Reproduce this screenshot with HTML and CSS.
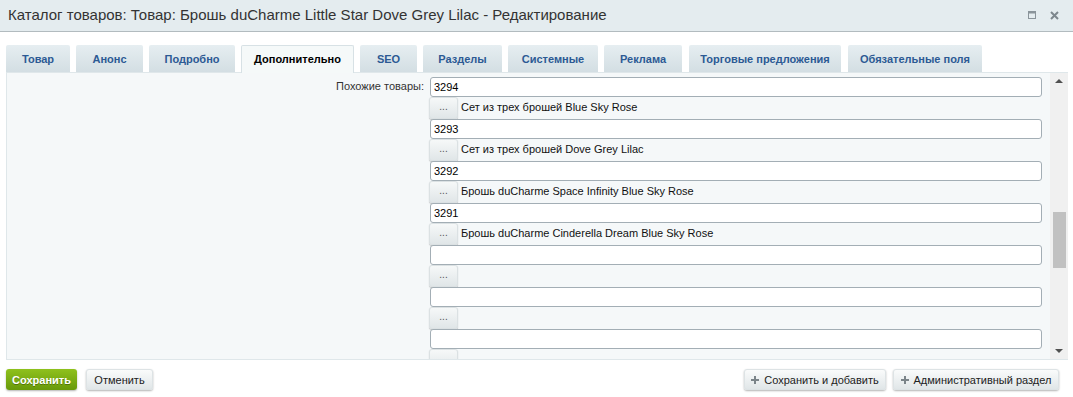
FILE: index.html
```html
<!DOCTYPE html>
<html lang="ru">
<head>
  <meta charset="UTF-8" />
  <title>Редактирование</title>
  <link rel="stylesheet" href="styles.css">
</head>
<body>

<div class="dialog">
  <div class="titlebar">
    <span class="title">Каталог товаров: Товар: Брошь duCharme Little Star Dove Grey Lilac - Редактирование</span>
    <span class="title-icons">
      <svg width="8" height="8" viewBox="0 0 8 8"><rect x="0.5" y="0.5" width="7" height="7" fill="none" stroke="#8a949a" stroke-width="1"/><rect x="0.5" y="0.5" width="7" height="2" fill="#8a949a"/></svg>
      <svg width="9" height="9" viewBox="0 0 9 9"><path d="M1 1L8 8M8 1L1 8" stroke="#7d878d" stroke-width="2"/></svg>
    </span>
  </div>

  <ul class="tabs">
    <li>Товар</li>
    <li>Анонс</li>
    <li>Подробно</li>
    <li class="active">Дополнительно</li>
    <li>SEO</li>
    <li>Разделы</li>
    <li>Системные</li>
    <li>Реклама</li>
    <li>Торговые предложения</li>
    <li>Обязательные поля</li>
  </ul>

  <div class="panel">
    <div class="panel-body">
      <div class="field-row">
        <div class="field-label">Похожие товары:</div>
        <div class="field-list">
          <input type="text" value="3294" />
          <div class="pick"><button>...</button><span>Сет из трех брошей Blue Sky Rose</span></div>
          <input type="text" value="3293" />
          <div class="pick"><button>...</button><span>Сет из трех брошей Dove Grey Lilac</span></div>
          <input type="text" value="3292" />
          <div class="pick"><button>...</button><span>Брошь duCharme Space Infinity Blue Sky Rose</span></div>
          <input type="text" value="3291" />
          <div class="pick"><button>...</button><span>Брошь duCharme Cinderella Dream Blue Sky Rose</span></div>
          <input type="text" value="" />
          <div class="pick"><button>...</button><span></span></div>
          <input type="text" value="" />
          <div class="pick"><button>...</button><span></span></div>
          <input type="text" value="" />
          <div class="pick"><button>...</button><span></span></div>
        </div>
      </div>
    </div>
    <div class="scrollbar">
      <span class="arrow up"></span>
      <span class="track"><span class="thumb"></span></span>
      <span class="arrow down"></span>
    </div>
  </div>

  <div class="footer">
    <div class="footer-left">
      <button class="btn btn-save">Сохранить</button>
      <button class="btn btn-cancel">Отменить</button>
    </div>
    <div class="footer-right">
      <button class="btn btn-plus"><i class="plus"></i>Сохранить и добавить</button>
      <button class="btn btn-plus"><i class="plus"></i>Административный раздел</button>
    </div>
  </div>
</div>

</body>
</html>
```

FILE: styles.css
```css
body {
  margin: 0;
  background-color: #fff;
  font-family: 'Liberation Sans', Arial, sans-serif;
  color: #000;
}

.dialog {
  width: 1073px;
  height: 397px;
  overflow: hidden;
}

/* заголовок окна */
.titlebar {
  height: 31px;
  background-color: #e4ecef;
  border-bottom: 1px solid #b2bbbf;
  display: flex;
  align-items: center;
  justify-content: space-between;
  padding: 0 14px 0 8px;
}

.title {
  font-size: 15px;
  color: #333;
  margin-top: -3px;
}

.title-icons {
  display: flex;
  align-items: center;
  gap: 14px;
  margin-top: -1px;
}

/* вкладки */
.tabs {
  list-style: none;
  margin: 13px 0 0;
  padding: 0 0 0 6px;
  display: flex;
  gap: 6px;
  height: 27px;
}

.tabs li {
  height: 27px;
  line-height: 28px;
  padding: 0;
  font-size: 11px;
  font-weight: bold;
  color: #2c5a94;
  background: linear-gradient(#e6eef1, #d3dee3);
  border-radius: 2px 2px 0 0;
  text-align: center;
  box-sizing: border-box;
  white-space: nowrap;
}

.tabs li:nth-child(1) { width: 64px; }
.tabs li:nth-child(2) { width: 67px; }
.tabs li:nth-child(3) { width: 86px; }
.tabs li:nth-child(4) { width: 113px; }
.tabs li:nth-child(5) { width: 57px; }
.tabs li:nth-child(6) { width: 79px; }
.tabs li:nth-child(7) { width: 90px; }
.tabs li:nth-child(8) { width: 78px; margin-right: 1px; }
.tabs li:nth-child(9) { width: 152px; margin-right: 1px; }
.tabs li:nth-child(10) { width: 134px; }

.tabs li.active {
  background: #f5f9f9;
  color: #000;
  border: 1px solid #d7e1e5;
  border-bottom: none;
  line-height: 27px;
  height: 28px;
  position: relative;
  z-index: 1;
}

/* панель */
.panel {
  margin: 0 5px 0 6px;
  height: 288px;
  background-color: #f5f8f9;
  border: 1px solid #dfe7ea;
  border-right: none;
  box-sizing: border-box;
  display: flex;
}

.panel-body {
  flex: 1;
  overflow: hidden;
  padding-top: 4px;
}

.field-row {
  display: flex;
  gap: 6px;
}

.field-label {
  width: 417px;
  text-align: right;
  font-size: 11px;
  color: #333;
  padding-top: 3px;
}

.field-list {
  width: 612px;
  display: flex;
  flex-direction: column;
}

.field-list input {
  height: 20px;
  box-sizing: border-box;
  border: 1px solid #a3aeb5;
  border-radius: 3px;
  background: #fff;
  font-family: inherit;
  font-size: 11px;
  color: #000;
  padding: 0 3px;
  margin: 0;
  outline: none;
}

.pick {
  height: 22px;
  display: flex;
  align-items: center;
  gap: 3px;
  font-size: 11px;
  color: #111;
}

.pick button {
  width: 29px;
  height: 22px;
  border: none;
  border-radius: 3px;
  background: linear-gradient(#f7f9f9, #dfe5e7);
  box-shadow: 0 1px 1px rgba(0, 0, 0, 0.25), inset 0 0 0 1px #dbe1e3;
  font-family: inherit;
  font-size: 10px;
  color: #555;
  padding: 0 0 3px;
  margin-left: -1px;
}

.pick span {
  margin-top: -3px;
}

/* полоса прокрутки */
.scrollbar {
  width: 18px;
  background-color: #f0f0f0;
  display: flex;
  flex-direction: column;
  align-items: center;
}

.arrow {
  height: 17px;
  width: 18px;
  position: relative;
}

.arrow::after {
  content: "";
  position: absolute;
  left: 5px;
  border-left: 4px solid transparent;
  border-right: 4px solid transparent;
}

.arrow.up::after {
  top: 6px;
  border-bottom: 4px solid #505050;
}

.arrow.down::after {
  top: 7px;
  border-top: 4px solid #505050;
}

.track {
  flex: 1;
  width: 13px;
  padding-top: 122px;
}

.thumb {
  display: block;
  height: 56px;
  background-color: #c1c1c1;
}

/* кнопки внизу */
.footer {
  display: flex;
  justify-content: space-between;
  padding: 9px 14px 0 6px;
}

.footer-left {
  display: flex;
  gap: 9px;
}

.footer-right {
  display: flex;
  gap: 7px;
}

.btn {
  height: 21px;
  border: none;
  border-radius: 3px;
  background: linear-gradient(#fbfcfc, #dfe5e7);
  box-shadow: 0 1px 2px rgba(0, 0, 0, 0.3), inset 0 0 0 1px #dde3e5;
  font-family: inherit;
  font-size: 11px;
  color: #222;
  padding: 0;
  display: flex;
  align-items: center;
  justify-content: center;
  white-space: nowrap;
}

.btn-save {
  width: 71px;
  background: linear-gradient(#8fc11d, #68990a);
  box-shadow: 0 1px 2px rgba(0, 0, 0, 0.3);
  color: #fff;
  font-weight: bold;
  text-shadow: 0 1px 0 rgba(0, 0, 0, 0.3);
}

.btn-cancel {
  width: 67px;
}

.btn-plus {
  gap: 5px;
}

.btn-plus:first-child {
  width: 142px;
}

.btn-plus:last-child {
  width: 166px;
}

.plus {
  width: 8px;
  height: 8px;
  position: relative;
  display: inline-block;
}

.plus::before,
.plus::after {
  content: "";
  position: absolute;
  background-color: #7b8489;
}

.plus::before {
  left: 3px;
  top: 0;
  width: 2px;
  height: 8px;
}

.plus::after {
  left: 0;
  top: 3px;
  width: 8px;
  height: 2px;
}
```
